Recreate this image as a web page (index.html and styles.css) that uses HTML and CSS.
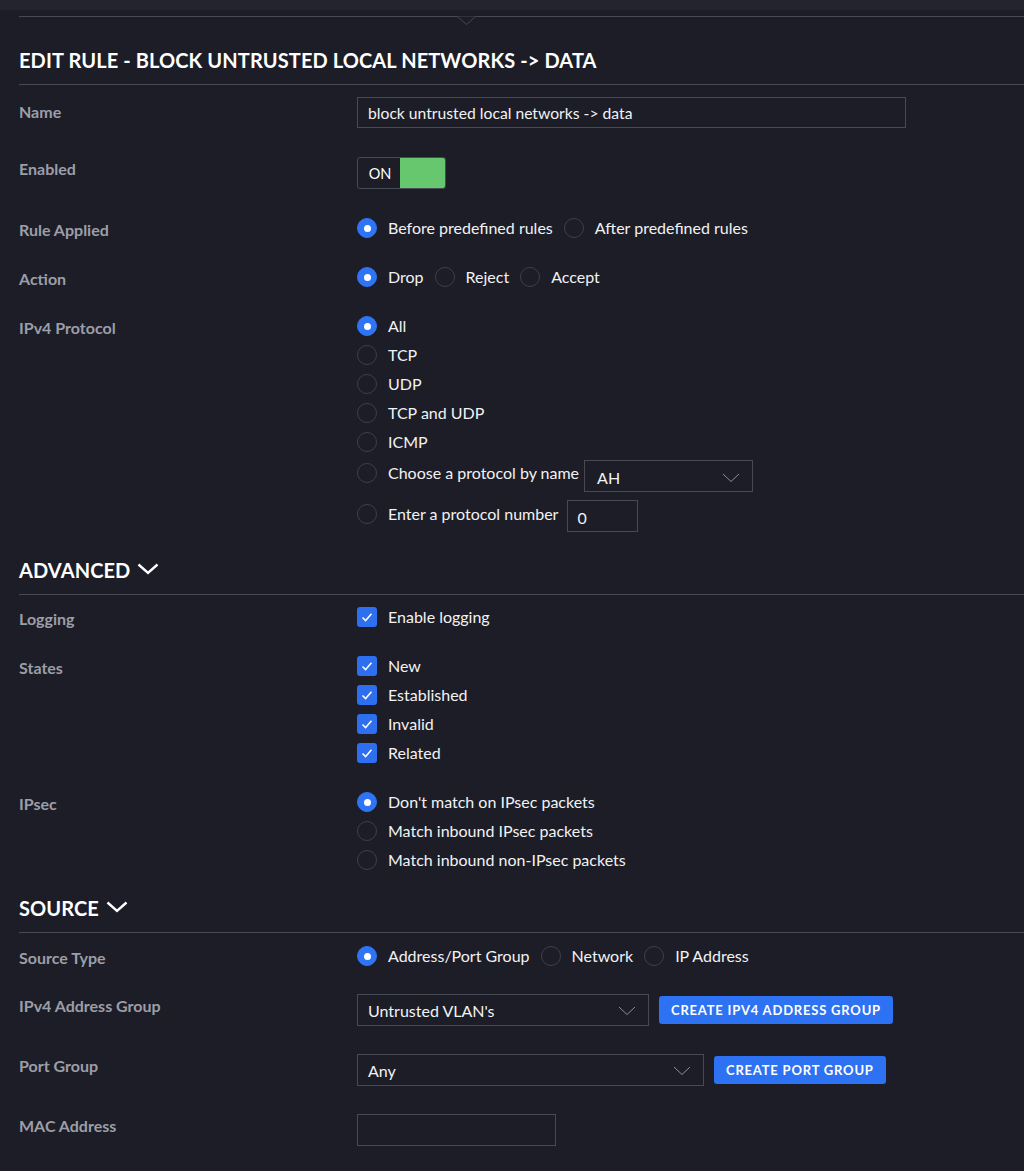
FILE: index.html
```html
<!DOCTYPE html>
<html>
<head>
<meta charset="utf-8">
<link rel="stylesheet" href="styles.css">
</head>
<body>
<div class="topbar"></div>
<div class="page">
  <div class="divider">
    <svg class="notch" width="20" height="10" viewBox="0 0 20 10"><polyline points="0.5,0.5 9.5,8.5 18.5,0.5" fill="#1c1d27" stroke="#474953" stroke-width="1"/></svg>
  </div>

  <section class="section first">
    <h2 class="section-title">EDIT RULE - BLOCK UNTRUSTED LOCAL NETWORKS -&gt; DATA</h2>
    <div class="rows">
      <div class="row">
        <div class="label name-label">Name</div>
        <div class="control"><div class="input name-input">block untrusted local networks -&gt; data</div></div>
      </div>
      <div class="row">
        <div class="label">Enabled</div>
        <div class="control">
          <div class="toggle"><span class="toggle-text">ON</span><span class="toggle-knob"></span></div>
        </div>
      </div>
      <div class="row">
        <div class="label">Rule Applied</div>
        <div class="control inline">
          <label class="opt"><span class="radio checked"></span>Before predefined rules</label>
          <label class="opt"><span class="radio"></span>After predefined rules</label>
        </div>
      </div>
      <div class="row">
        <div class="label">Action</div>
        <div class="control inline">
          <label class="opt"><span class="radio checked"></span>Drop</label>
          <label class="opt"><span class="radio"></span>Reject</label>
          <label class="opt"><span class="radio"></span>Accept</label>
        </div>
      </div>
      <div class="row">
        <div class="label">IPv4 Protocol</div>
        <div class="control list">
          <label class="opt"><span class="radio checked"></span>All</label>
          <label class="opt"><span class="radio"></span>TCP</label>
          <label class="opt"><span class="radio"></span>UDP</label>
          <label class="opt"><span class="radio"></span>TCP and UDP</label>
          <label class="opt"><span class="radio"></span>ICMP</label>
          <div class="opt-field">
            <label class="opt shift3"><span class="radio"></span>Choose a protocol by name</label>
            <div class="select proto-select"><span>AH</span><svg class="caret" width="18" height="10" viewBox="0 0 18 10"><polyline points="1,1 9,8.5 17,1" fill="none" stroke="#8d8f98" stroke-width="1"/></svg></div>
          </div>
          <div class="opt-field wide-gap">
            <label class="opt shift4"><span class="radio"></span>Enter a protocol number</label>
            <div class="input num-input">0</div>
          </div>
        </div>
      </div>
    </div>
  </section>

  <section class="section">
    <h2 class="section-title">ADVANCED <svg class="sec-chev" width="22" height="12" viewBox="0 0 22 12"><polyline points="1.5,1.5 11,10 20.5,1.5" fill="none" stroke="#ffffff" stroke-width="2.4"/></svg></h2>
    <div class="rows">
      <div class="row">
        <div class="label">Logging</div>
        <div class="control">
          <label class="opt"><span class="check"><svg width="20" height="20" viewBox="0 0 20 20"><polyline points="5.5,10.5 8.6,13.6 14.5,6.8" fill="none" stroke="#fff" stroke-width="1.5"/></svg></span>Enable logging</label>
        </div>
      </div>
      <div class="row">
        <div class="label">States</div>
        <div class="control list">
          <label class="opt"><span class="check"><svg width="20" height="20" viewBox="0 0 20 20"><polyline points="5.5,10.5 8.6,13.6 14.5,6.8" fill="none" stroke="#fff" stroke-width="1.5"/></svg></span>New</label>
          <label class="opt"><span class="check"><svg width="20" height="20" viewBox="0 0 20 20"><polyline points="5.5,10.5 8.6,13.6 14.5,6.8" fill="none" stroke="#fff" stroke-width="1.5"/></svg></span>Established</label>
          <label class="opt"><span class="check"><svg width="20" height="20" viewBox="0 0 20 20"><polyline points="5.5,10.5 8.6,13.6 14.5,6.8" fill="none" stroke="#fff" stroke-width="1.5"/></svg></span>Invalid</label>
          <label class="opt"><span class="check"><svg width="20" height="20" viewBox="0 0 20 20"><polyline points="5.5,10.5 8.6,13.6 14.5,6.8" fill="none" stroke="#fff" stroke-width="1.5"/></svg></span>Related</label>
        </div>
      </div>
      <div class="row">
        <div class="label">IPsec</div>
        <div class="control list">
          <label class="opt"><span class="radio checked"></span>Don't match on IPsec packets</label>
          <label class="opt"><span class="radio"></span>Match inbound IPsec packets</label>
          <label class="opt"><span class="radio"></span>Match inbound non-IPsec packets</label>
        </div>
      </div>
    </div>
  </section>

  <section class="section">
    <h2 class="section-title">SOURCE <svg class="sec-chev" width="22" height="12" viewBox="0 0 22 12"><polyline points="1.5,1.5 11,10 20.5,1.5" fill="none" stroke="#ffffff" stroke-width="2.4"/></svg></h2>
    <div class="rows source-rows">
      <div class="row">
        <div class="label">Source Type</div>
        <div class="control inline">
          <label class="opt"><span class="radio checked"></span>Address/Port Group</label>
          <label class="opt"><span class="radio"></span>Network</label>
          <label class="opt"><span class="radio"></span>IP Address</label>
        </div>
      </div>
      <div class="row">
        <div class="label">IPv4 Address Group</div>
        <div class="control field-btn">
          <div class="select group-select"><span>Untrusted VLAN's</span><svg class="caret" width="18" height="10" viewBox="0 0 18 10"><polyline points="1,1 9,8.5 17,1" fill="none" stroke="#8d8f98" stroke-width="1"/></svg></div>
          <button class="btn">CREATE IPV4 ADDRESS GROUP</button>
        </div>
      </div>
      <div class="row">
        <div class="label">Port Group</div>
        <div class="control field-btn">
          <div class="select port-select"><span>Any</span><svg class="caret" width="18" height="10" viewBox="0 0 18 10"><polyline points="1,1 9,8.5 17,1" fill="none" stroke="#8d8f98" stroke-width="1"/></svg></div>
          <button class="btn">CREATE PORT GROUP</button>
        </div>
      </div>
      <div class="row">
        <div class="label">MAC Address</div>
        <div class="control"><div class="input mac-input"></div></div>
      </div>
    </div>
  </section>
</div>
</body>
</html>
```

FILE: styles.css
```css
* { box-sizing: border-box; }

body {
  margin: 0;
  background: #1c1d27;
  color: #f2f2f4;
  font-family: Lato, "Open Sans", sans-serif;
  font-size: 16px;
  height: 1171px;
  overflow: hidden;
}

.topbar {
  height: 10px;
  background: #23242f;
}

.page {
  padding: 6px 0 0 19px;
}

.divider {
  position: relative;
  border-top: 1px solid #474953;
}

.notch {
  position: absolute;
  left: 438px;
  top: -1px;
}

.section {
  margin-top: 26px;
}

.section.first {
  margin-top: 0;
  padding-top: 31px;
}

.section-title {
  margin: 0;
  font-size: 20px;
  line-height: 24px;
  font-weight: 700;
  color: #ffffff;
  letter-spacing: 0.1px;
  padding-bottom: 12px;
  border-bottom: 1px solid #474953;
  display: flex;
  align-items: center;
}

.sec-chev {
  margin-left: 7px;
  margin-top: -2px;
}

.rows {
  display: flex;
  flex-direction: column;
  gap: 29px;
  padding-top: 12px;
}

.rows.source-rows {
  padding-top: 13px;
  gap: 28px;
}

.row {
  display: grid;
  grid-template-columns: 338px 1fr;
  align-items: start;
}

.label {
  color: #9c9ea8;
  font-weight: 700;
  line-height: 20px;
  padding-top: 2px;
  margin-bottom: -2px;
}

.label.name-label {
  padding-top: 5px;
  margin-bottom: -5px;
}

.control {
  display: flex;
}

.control.inline {
  gap: 11px;
}

.control.list {
  flex-direction: column;
  gap: 9px;
}

.opt {
  display: flex;
  align-items: center;
  gap: 11px;
  line-height: 20px;
  height: 20px;
  color: #f2f2f4;
  white-space: nowrap;
}

.radio {
  width: 20px;
  height: 20px;
  border-radius: 50%;
  border: 1px solid #3d3f49;
  flex: none;
  position: relative;
}

.radio.checked {
  background: #2e74f5;
  border-color: #2e74f5;
}

.radio.checked::after {
  content: "";
  position: absolute;
  left: 50%;
  top: 50%;
  width: 7px;
  height: 7px;
  margin: -3.5px 0 0 -3.5px;
  border-radius: 50%;
  background: #ffffff;
}

.check {
  width: 20px;
  height: 20px;
  background: #2e6ff0;
  border-radius: 3px;
  flex: none;
  display: flex;
}

.opt-field {
  display: flex;
  align-items: flex-start;
  gap: 5px;
  margin-top: -1px;
}

.opt-field.wide-gap {
  gap: 9px;
}

.shift3 { margin-top: 3px; }
.shift4 { margin-top: 4px; }

.input,
.select {
  height: 32px;
  border: 1px solid #474953;
  color: #f2f2f4;
  display: flex;
  align-items: center;
  padding: 0 10px;
  font-size: 16px;
}

.name-input {
  width: 549px;
  height: 31px;
  font-size: 15.7px;
}

.num-input {
  width: 71px;
  padding-left: 9px;
  padding-top: 2px;
}

.mac-input {
  width: 199px;
}

.select {
  justify-content: space-between;
  padding-right: 12px;
}

.proto-select {
  width: 169px;
  padding-left: 12px;
  padding-top: 2px;
}

.group-select {
  width: 292px;
}

.port-select {
  width: 347px;
}

.caret {
  flex: none;
  margin-top: 2px;
}

.field-btn {
  align-items: center;
  gap: 10px;
}

.btn {
  height: 28px;
  border: none;
  border-radius: 3px;
  background: #2d72f2;
  color: #ffffff;
  font-family: Lato, sans-serif;
  font-weight: 700;
  font-size: 13px;
  letter-spacing: 0.8px;
  padding: 0 12px 0 12px;
}

.toggle {
  width: 89px;
  height: 32px;
  border: 1px solid #474953;
  border-radius: 3px;
  display: flex;
  overflow: hidden;
}

.toggle-text {
  width: 42px;
  display: flex;
  align-items: center;
  justify-content: center;
  font-size: 14.5px;
  color: #ffffff;
  padding-left: 2px;
}

.toggle-knob {
  flex: 1;
  background: #66c76f;
}
```
